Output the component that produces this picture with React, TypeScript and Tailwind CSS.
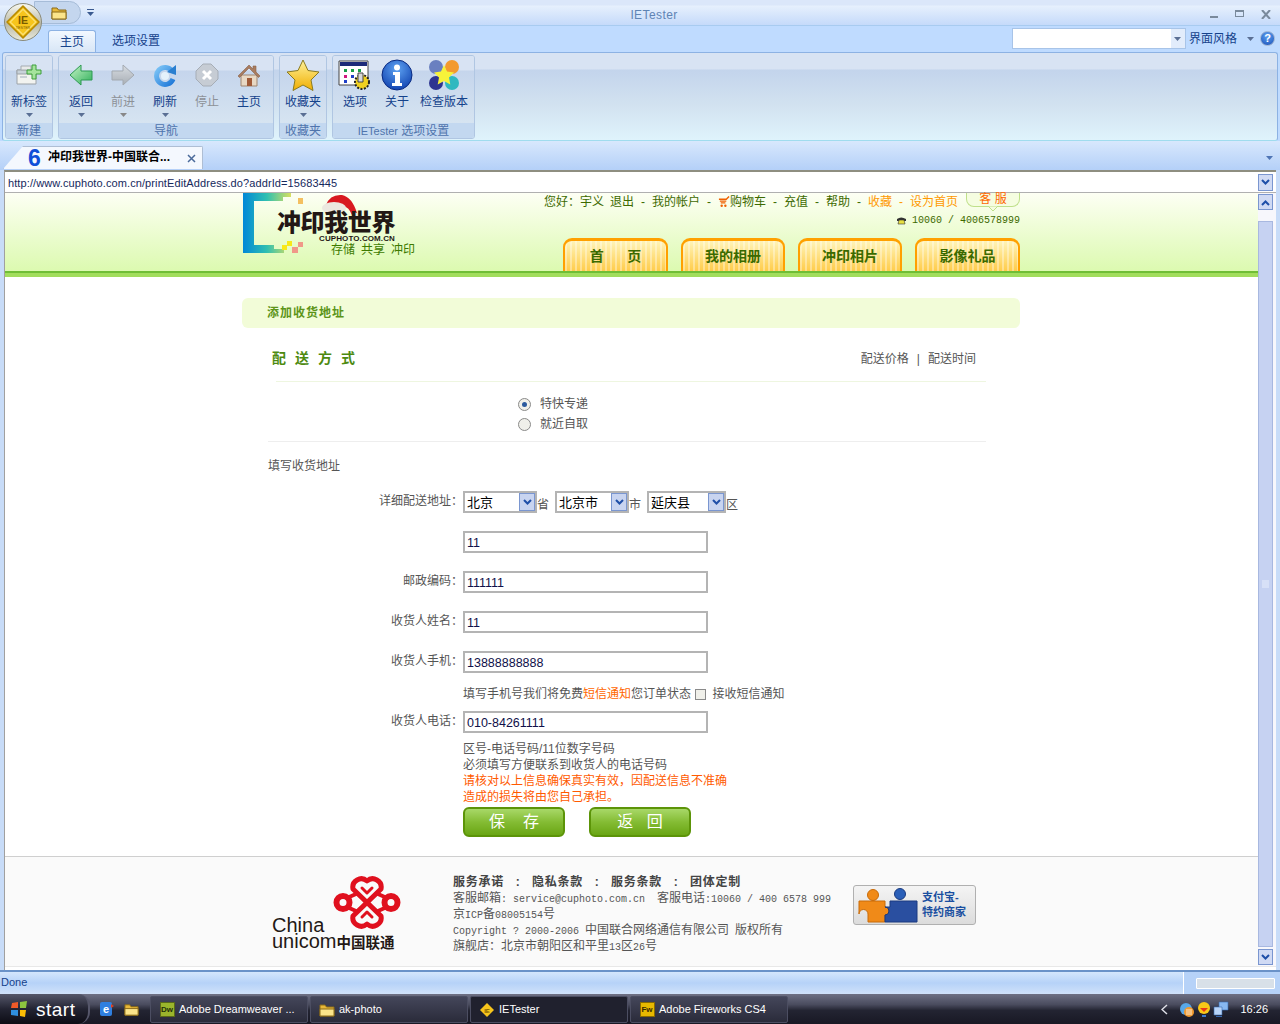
import React from "react";

const Arrow = ({ c = "#5a6f94" }: { c?: string }) => (
  <svg width="7" height="4" viewBox="0 0 7 4" className="block"><path d="M0 0h7L3.5 4z" fill={c} /></svg>
);

const Orb = () => (
  <div className="absolute left-[4px] top-[3px] w-[38px] h-[38px] rounded-full bg-[linear-gradient(180deg,#f8f8f0,#b9b9a8_55%,#e8e8da)] border border-[#8a8a78] flex items-center justify-center">
    <svg width="34" height="34" viewBox="0 0 32 32">
      <path d="M16 1 31 16 16 31 1 16z" fill="#f7c51c" stroke="#b88a00" strokeWidth="1.500" strokeLinejoin="round" />
      <path d="M16 4 28 16 16 28 4 16z" fill="none" stroke="#fbe27a" />
      <text x="16" y="17.500" textAnchor="middle" fontSize="10" fontWeight="700" fill="#7a5c00" fontFamily="Liberation Sans">IE</text>
      <text x="16" y="22.500" textAnchor="middle" fontSize="3.500" fill="#7a5c00" fontFamily="Liberation Sans">TESTER</text>
    </svg>
  </div>
);

const Folder = ({ s = 16 }: { s?: number }) => (
  <svg width={s} height={s} viewBox="0 0 16 16">
    <path d="M1 3h5l1.500 2H15v9H1z" fill="#e8b838" stroke="#8a6a18" />
    <path d="M1 7h14v7H1z" fill="#fbe48a" stroke="#8a6a18" />
  </svg>
);

const IcoNew = () => (
  <svg width="28" height="28" viewBox="0 0 28 28">
    <path d="M2 9h19v14H2z" fill="#f2f3f0" stroke="#9da3a8" />
    <path d="M2 9h19v4H2z" fill="#c8d2da" stroke="#9da3a8" />
    <path d="M6 5h10v4H6z" fill="#e8eaea" stroke="#a5abb0" />
    <path d="M5 15h7v2H5z" fill="#c9d0d6" />
    <path d="M17 4h4v5h5v4h-5v5h-4v-5h-5V9h5z" fill="#a5e39d" stroke="#3d9e3a" />
  </svg>
);
const IcoBack = () => (
  <svg width="24" height="24" viewBox="0 0 24 24">
    <defs>
      <linearGradient id="bk" x1="0" y1="0" x2="1" y2="1"><stop offset="0" stopColor="#c8f4c8" /><stop offset="1" stopColor="#2fb05a" /></linearGradient>
    </defs>
    <path d="M1 12 12 2v6h11v9H12v5z" fill="url(#bk)" stroke="#2c9a52" strokeLinejoin="round" />
  </svg>
);
const IcoFwd = () => (
  <svg width="24" height="24" viewBox="0 0 24 24">
    <defs>
      <linearGradient id="fw" x1="0" y1="0" x2="0" y2="1"><stop offset="0" stopColor="#d8dde2" /><stop offset="1" stopColor="#a8aeb5" /></linearGradient>
    </defs>
    <path d="M23 12 12 2v6H1v9h11v5z" fill="url(#fw)" stroke="#a3a9b0" strokeLinejoin="round" />
  </svg>
);
const IcoRefresh = () => (
  <svg width="24" height="24" viewBox="0 0 24 24">
    <defs>
      <linearGradient id="rf" x1="0" y1="0" x2="1" y2="1"><stop offset="0" stopColor="#7cc4f6" /><stop offset="1" stopColor="#1f78d8" /></linearGradient>
    </defs>
    <path d="M19 8a8.500 8.500 0 1 0 1 8" fill="none" stroke="url(#rf)" strokeWidth="5" />
    <circle cx="12" cy="13" r="4" fill="#e4f1fb" />
    <path d="M14 9l9-7v10z" fill="#2a7fd0" />
  </svg>
);
const IcoStop = () => (
  <svg width="24" height="24" viewBox="0 0 24 24">
    <path d="M8 1h8l7 7v8l-7 7H8l-7-7V8z" fill="#c6ccd4" stroke="#a6adb6" />
    <path d="M8 8l8 8M16 8l-8 8" stroke="#fff" strokeWidth="3" />
  </svg>
);
const IcoHome = () => (
  <svg width="24" height="24" viewBox="0 0 24 24">
    <path d="M4 12h16v11H4z" fill="#e8d8c4" stroke="#a08670" />
    <path d="M1 13 12 2l4 4V3h3v6l4 4-1.500 1.500L12 5 2.500 14.500z" fill="#a87c60" stroke="#8a6248" strokeWidth=".6" />
    <path d="M10 15h5v8h-5z" fill="#a05a38" />
  </svg>
);
const IcoStar = () => (
  <svg width="34" height="32" viewBox="0 0 34 32">
    <defs>
      <linearGradient id="st" x1="0" y1="0" x2="0" y2="1"><stop offset="0" stopColor="#fff29a" /><stop offset="1" stopColor="#f0ae00" /></linearGradient>
    </defs>
    <path d="M17 1l5 10.500 11 1.500-8 8 2 10.500-10-5.500-10 5.500 2-10.500-8-8 11-1.500z" fill="url(#st)" stroke="#8a7a20" strokeLinejoin="round" />
  </svg>
);
const IcoOpts = () => (
  <svg width="34" height="30" viewBox="0 0 34 30">
    <path d="M1 1h29v24H1z" fill="#fff" stroke="#444" />
    <path d="M2 2h27v4H2z" fill="#1c2a78" />
    <path d="M6 9h3v3H6zM13 9h3v3h-3zM20 9h3v3h-3z" fill="#18a048" />
    <path d="M6 15h3v3H6zM20 15h3v3h-3z" fill="#d01880" />
    <path d="M13 15h3v3h-3zM6 20h3v3H6z" fill="#2040c8" />
    <circle cx="24" cy="22" r="7" fill="#f0d020" stroke="#222" strokeDasharray="2 1.500" strokeWidth="2" />
    <path d="M20 13h5v9h-5z" fill="#d8d8d8" stroke="#444" />
  </svg>
);
const IcoInfo = () => (
  <svg width="32" height="32" viewBox="0 0 32 32">
    <defs>
      <radialGradient id="inf" cx=".5" cy=".3" r=".8"><stop offset="0" stopColor="#5ea2f2" /><stop offset="1" stopColor="#0838a8" /></radialGradient>
    </defs>
    <circle cx="16" cy="16" r="15" fill="url(#inf)" stroke="#0a2a80" />
    <circle cx="16" cy="8.500" r="3" fill="#fff" />
    <path d="M12 13h7v11h2v3H11v-3h3v-8h-2z" fill="#fff" />
  </svg>
);
const IcoCheck = () => (
  <svg width="34" height="32" viewBox="0 0 34 32">
    <circle cx="9" cy="8" r="7" fill="#6a80c0" />
    <circle cx="25" cy="8" r="7" fill="#f39a2e" />
    <circle cx="9" cy="24" r="7" fill="#2e3590" />
    <circle cx="25" cy="24" r="7" fill="#2fb8c0" />
    <path d="M17 6l3 6.500 7 1-5 5 1.300 7L17 22l-6.300 3.500 1.300-7-5-5 7-1z" fill="#f7f23a" />
  </svg>
);

const RBtn = ({ icon, label, arrow, off, w = "w-[42px]" }: { icon: React.ReactNode; label: string; arrow?: boolean; off?: boolean; w?: string }) => (
  <div className={`${w} h-[67px] shrink-0 flex flex-col items-center`}>
    <div className="h-[35px] mt-[1px] flex items-center justify-center">{icon}</div>
    <div className={`mt-[2px] h-[16px] leading-[16px] text-[12px] whitespace-nowrap ${off ? "text-[#8d9197]" : "text-[#15428b]"}`}>{label}</div>
    {arrow && <div className="mt-[3px]"><Arrow c={off ? "#888" : "#5a6f94"} /></div>}
  </div>
);

const Group = ({ w, label, children }: { w: string; label: React.ReactNode; children: React.ReactNode }) => (
  <div className={`${w} h-[84px] rounded-[3px] border border-[#b0c6e2] flex flex-col overflow-hidden shrink-0`}>
    <div className="h-[67px] px-[1px] flex justify-start bg-[linear-gradient(180deg,#d8e3f3_0,#d8e3f3_14px,#c5d5ec_15px,#d6e4f1_100%)]">{children}</div>
    <div className="flex-1 bg-[#c3d8f0] pt-[1px] text-center text-[12px] leading-[14px] text-[#4f74ad] whitespace-pre">{label}</div>
  </div>
);

const Select = ({ w, text }: { w: string; text: string }) => (
  <div className={`${w} h-[22px] border-2 border-[#b4b4b4] bg-white flex items-center justify-between text-[13px] text-black`}>
    <span className="pl-[2px] leading-none">{text}</span>
    <span className="w-[16px] h-[18px] border border-[#7a96d0] bg-[#c8d4f0] flex items-center justify-center">
      <svg width="9" height="7" viewBox="0 0 9 7"><path d="M1 1l3.500 3.500L8 1" fill="none" stroke="#1f4fa8" strokeWidth="2" /></svg>
    </span>
  </div>
);

const Field = ({ v }: { v: string }) => (
  <input readOnly value={v} className="w-[245px] h-[22px] border-2 border-[#b4b4b4] bg-white px-[2px] pt-[1px] text-[12.500px] text-[#10104a] outline-none font-['Liberation_Sans',sans-serif]" />
);

const Row = ({ label, mt = "mt-[18px]", children }: { label?: string; mt?: string; children: React.ReactNode }) => (
  <div className={`${mt} h-[22px] flex items-center`}>
    <div className="w-[221px] shrink-0 pb-[2px] text-right text-[12px] text-[#555] leading-none">{label}</div>
    {children}
  </div>
);

const NavTab = ({ t, w }: { t: string; w: string }) => (
  <div className={`${w} h-[33px] rounded-t-[9px] border-x-2 border-t-[3px] border-[#ffa000] bg-[repeating-linear-gradient(90deg,rgba(255,255,255,.35)_0,rgba(255,255,255,.35)_2px,transparent_2px,transparent_5px),linear-gradient(180deg,#fff4b8,#ffcc4a)] flex items-center justify-center text-[14px] font-bold text-[#3a6a00] whitespace-pre`}>{t}</div>
);

const Dash = ({ c = "text-[#3d6a00]" }: { c?: string }) => <span className={`w-[6px] text-center ${c}`}>-</span>;

const M = ({ children }: { children: React.ReactNode }) => (
  <span className="font-['Liberation_Mono',monospace] text-[10px]">{children}</span>
);

const GreenBtn = ({ t }: { t: string }) => (
  <div className="w-[102px] h-[30px] rounded-[6px] border-2 border-[#5c9408] bg-[linear-gradient(180deg,#a8d868,#84bc34_50%,#6aa614)] flex items-center justify-center text-white text-[16px] whitespace-pre">{t}</div>
);

const Knot = () => (
  <svg width="70" height="55" viewBox="0 0 70 55">
    <g fill="none" stroke="#e0101e" strokeWidth="5" strokeLinejoin="round" strokeLinecap="round">
      <path d="M35 27.500 21 14a8.500 8.500 0 0 1 14-8 8.500 8.500 0 0 1 14 8z" />
      <path d="M35 27.500 21 41a8.500 8.500 0 0 0 14 8 8.500 8.500 0 0 0 14-8z" />
      <path d="M30 13l5 5 5-5M30 42l5-5 5 5" strokeWidth="3" />
      <circle cx="11" cy="27.500" r="6.500" strokeWidth="6" />
      <circle cx="59" cy="27.500" r="6.500" strokeWidth="6" />
      <path d="M24 19 15 23M24 36l-9-4M46 19l9 4M46 36l9-4" strokeWidth="4" />
    </g>
  </svg>
);

const Puzzle = () => (
  <svg width="66" height="35" viewBox="0 0 66 35">
    <circle cx="17" cy="7" r="5.500" fill="#f08a18" stroke="#c86a08" />
    <path d="M3 13h26v6a4 4 0 1 1 0 8v7H12v-8a4 4 0 1 0-9 0z" fill="#f08a18" stroke="#c86a08" />
    <circle cx="44" cy="6" r="5.500" fill="#2a5fb8" stroke="#1a3a80" />
    <path d="M29 19a4 4 0 1 1 0 8v7h32V13H34v6z" fill="#2a4fa0" stroke="#1a3a80" />
  </svg>
);

const TaskBtn = ({ icon, t, active }: { icon: React.ReactNode; t: string; active?: boolean }) => (
  <div className={`w-[158px] h-[27px] shrink-0 mt-[2px] mr-[2px] rounded-[2px] border border-[#4c4e62] flex items-center pl-[8px] gap-[4px] text-white text-[11px] ${active ? "bg-[#20212e]" : "bg-[linear-gradient(180deg,#44465a,#2a2b3a)]"}`}>
    <span className="w-[16px] h-[16px] flex items-center justify-center shrink-0">{icon}</span>
    <span className="whitespace-nowrap">{t}</span>
  </div>
);

export default function App() {
  return (
    <div className="relative w-[1280px] h-[1024px] overflow-hidden flex flex-col bg-[#bfdbff] font-['Liberation_Sans','Noto_Sans_CJK_SC',sans-serif]">
      <Orb />
      {/* title bar */}
      <div className="h-[26px] shrink-0 border-b border-[#a8cbf0] bg-[linear-gradient(180deg,#dbe7fa,#dbe7fa_5px,#e6f0fd_6px,#c5dafa)] flex items-center">
        <div className="ml-[34px] w-[47px] h-[23px] rounded-r-[12px] bg-[#c4d6ee] border border-[#a6bcd8] flex items-center justify-center pl-[3px]"><Folder /></div>
        <div className="ml-[6px]"><svg width="7" height="7" viewBox="0 0 7 7"><path d="M0 0h7v1H0zM0 3h7L3.500 7z" fill="#3a5a90" /></svg></div>
        <div className="flex-1 text-center text-[12px] text-[#5f84b4] pt-[4px] pl-[4px] tracking-[0.4px]">IETester</div>
        <div className="flex items-center gap-[17px] pr-[9px] pt-[3px]">
          <span className="w-[8px] h-[2px] mt-[6px] bg-[#7a8a9c]" />
          <span className="w-[9px] h-[7px] border border-[#7a8a9c] border-t-2 -mt-[2px]" />
          <svg width="10" height="9" viewBox="0 0 10 9"><path d="M1 0l8 9M9 0 1 9" stroke="#7a8a9c" strokeWidth="2" /></svg>
        </div>
      </div>
      {/* ribbon tabs */}
      <div className="h-[26px] shrink-0 bg-[#bfdbff] flex items-end">
        <div className="ml-[48px] w-[48px] h-[22px] rounded-t-[3px] border border-b-0 border-[#8db2e3] bg-[linear-gradient(180deg,#f2f8ff,#d8e6f6)] text-center text-[12px] leading-[22px] text-[#15428b]">主页</div>
        <div className="ml-[16px] h-[22px] text-[12px] leading-[22px] text-[#15428b]">选项设置</div>
        <div className="flex-1" />
        <div className="w-[174px] h-[21px] mb-[3px] border border-[#a8c4e8] bg-white flex justify-end">
          <span className="w-[14px] bg-[#e2ecfb] flex items-center justify-center"><Arrow /></span>
        </div>
        <div className="ml-[3px] h-[24px] text-[12px] leading-[22px] text-[#15428b]">界面风格</div>
        <div className="ml-[10px] h-[24px] pt-[9px]"><Arrow /></div>
        <div className="ml-[6px] mr-[5px] mb-[6px] w-[15px] h-[15px] rounded-full bg-[radial-gradient(circle_at_50%_30%,#5ea2f2,#1a50b8)] border border-[#a0b4d0] text-white text-[11px] font-bold text-center leading-[13px]">?</div>
      </div>
      {/* ribbon */}
      <div className="h-[89px] shrink-0 mx-[2px] rounded-[3px] border border-[#8db2e3] border-b-[#a0dcee] bg-[linear-gradient(180deg,#d8e3f3_0,#d8e3f3_16px,#c3d4ec_17px,#d2e2f0_60%,#dff3fc_100%)] pt-[2px] px-[2px] flex gap-[5px]">
        <Group w="w-[48px]" label="新建"><RBtn icon={<IcoNew />} label="新标签" arrow w="w-[44px]" /></Group>
        <Group w="w-[216px]" label="导航">
          <RBtn icon={<IcoBack />} label="返回" arrow />
          <RBtn icon={<IcoFwd />} label="前进" arrow off />
          <RBtn icon={<IcoRefresh />} label="刷新" arrow />
          <RBtn icon={<IcoStop />} label="停止" off />
          <RBtn icon={<IcoHome />} label="主页" />
        </Group>
        <Group w="w-[48px]" label="收藏夹"><RBtn icon={<IcoStar />} label="收藏夹" arrow w="w-[44px]" /></Group>
        <Group w="w-[143px]" label={<><span className="text-[11px]">IETester</span> 选项设置</>}>
          <RBtn icon={<IcoOpts />} label="选项" />
          <RBtn icon={<IcoInfo />} label="关于" />
          <RBtn icon={<IcoCheck />} label="检查版本" w="w-[52px]" />
        </Group>
      </div>
      {/* browser tab row */}
      <div className="h-[29px] shrink-0 bg-[linear-gradient(180deg,#d8e8fd,#b4d0f8)] flex items-end">
        <div className="ml-[3px] w-[200px] h-[23px] mb-[1px] bg-[#f4f8fe] border border-b-0 border-[#aebed4] rounded-tr-[2px] [clip-path:polygon(20px_0,100%_0,100%_100%,0_100%)] flex items-center pl-[23px]">
          <span className="w-[15px] text-center text-[23px] font-bold leading-none text-[#1050d8] font-['Liberation_Sans']">6</span>
          <span className="ml-[6px] -mt-[2px] w-[132px] text-[12px] font-bold text-black whitespace-nowrap">冲印我世界-中国联合...</span>
          <svg className="ml-[7px]" width="9" height="9" viewBox="0 0 9 9"><path d="M1 1l7 7M8 1 1 8" stroke="#4a6a9a" strokeWidth="1.500" /></svg>
        </div>
        <div className="flex-1 flex justify-end pr-[7px] pb-[10px]"><Arrow c="#4f75b5" /></div>
      </div>
      {/* browser frame */}
      <div className="flex-1 min-h-0 px-[4px] flex bg-[#c8dcf8]">
        <div className="flex-1 min-w-0 flex flex-col border-t-2 border-[#8e8e80] border-l border-l-[#a0a0a0] bg-white">
          <div className="h-[21px] shrink-0 flex items-center justify-between border-b border-[#b0b0b0] pr-[3px]">
            <span className="pl-[3px] pt-[2px] text-[11px] text-[#15285c] tracking-[0.1px]">http://www.cuphoto.com.cn/printEditAddress.do?addrId=15683445</span>
            <span className="w-[15px] h-[17px] border border-[#7a96d0] bg-[#d0daf4] flex items-center justify-center">
              <svg width="9" height="7" viewBox="0 0 9 7"><path d="M1 1l3.500 3.500L8 1" fill="none" stroke="#1f4fa8" strokeWidth="2" /></svg>
            </span>
          </div>
          <div className="flex-1 min-h-0 flex">
            {/* page */}
            <div className="flex-1 min-w-0 flex flex-col">
              {/* header */}
              <div className="h-[78px] shrink-0 bg-[linear-gradient(180deg,#fdfff4,#dcfab0)]">
                <div className="w-[778px] ml-[237px] flex justify-between">
                  {/* logo */}
                  <div className="relative w-[174px] h-[62px]">
                    <svg className="absolute left-0 top-0" width="174" height="62" viewBox="0 0 174 62">
                      <defs><linearGradient id="lg" x1="0" y1="0" x2="1" y2="0"><stop offset="0" stopColor="#0088d8" /><stop offset=".5" stopColor="#30c0b0" /><stop offset="1" stopColor="#d8e060" /></linearGradient></defs>
                      <path d="M1 0h48v4h-8v4H12v44h20v4h10v4H1z" fill="url(#lg)" />
                      <path d="M56 5h5v6h-5z" fill="#f4c060" />
                      <path d="M40 52h5v5h-5zM45 48h5v5h-5z" fill="#f8e818" />
                      <path d="M50 54h6v6h-6zM56 49h5v5h-5z" fill="#f09888" />
                      <path d="M84 12Q88 1 100 2q10 2 15 18l-5 2q-4-10-10-8L84 16z" fill="#d81820" />
                      <ellipse cx="92" cy="15" rx="12" ry="6" fill="#ece8e0" />
                      <circle cx="113" cy="22" r="2.500" fill="#ece8e0" />
                    </svg>
                    <div className="absolute left-[35px] top-[15px] text-[24px] leading-[30px] font-black text-[#231815] whitespace-nowrap tracking-[-0.400px]">冲印我世界</div>
                    <div className="absolute left-[77px] top-[41px] text-[8px] leading-[9px] font-bold text-[#231815] whitespace-nowrap tracking-[0.1px]">CUPHOTO.COM.CN</div>
                    <div className="absolute left-[89px] top-[50px] text-[12px] leading-[14px] text-[#3d7a00] flex gap-[6px]"><span>存储</span><span>共享</span><span>冲印</span></div>
                  </div>
                  {/* right */}
                  <div className="w-[476px] flex flex-col items-end">
                    <div className="h-[16px] flex items-start">
                      <div className="flex items-center gap-[6px] text-[12px] leading-[16px] pt-[1px] text-[#3d6a00] whitespace-pre">
                        <span>您好：宇义</span><span>退出</span><Dash /><span>我的帐户</span><Dash />
                        <span className="flex items-center">
                          <svg width="12" height="12" viewBox="0 0 13 12"><path d="M1 3h8l3-3M2 5h7M3 7h5" stroke="#f06000" strokeWidth="1.500" fill="none" /><circle cx="4" cy="10" r="1.300" fill="#f06000" /><circle cx="8" cy="10" r="1.300" fill="#f06000" /></svg>
                          <span>购物车</span>
                        </span>
                        <Dash /><span>充值</span><Dash /><span>帮助</span><Dash />
                        <span className="text-[#ff9900]">收藏</span><Dash c="text-[#ff9900]" /><span className="text-[#ff9900]">设为首页</span>
                      </div>
                      <div className="ml-[8px] relative w-[54px] h-[14px] rounded-b-[8px] border border-t-0 border-[#bfe08a] bg-[#f5fde0] text-center text-[12px] leading-[12px] text-[#ff6600] whitespace-pre">客 服
                        <svg className="absolute left-[21px] top-[13px]" width="10" height="5" viewBox="0 0 10 5"><path d="M0 0l5 5 5-5z" fill="#f5fde0" stroke="#bfe08a" /></svg>
                      </div>
                    </div>
                    <div className="mt-[3px] h-[16px] flex items-center text-[#3d6a00]">
                      <svg className="mr-[5px]" width="11" height="9" viewBox="0 0 11 9"><path d="M1 3q4-3 9 0v2H8V4H3v1H1z" fill="#333" /><path d="M3 4h5l1 4H2z" fill="#e8e040" stroke="#333" strokeWidth=".6" /></svg>
                      <M>10060 / 4006578999</M>
                    </div>
                    <div className="mt-[10px] flex gap-[13px]">
                      <NavTab t={"首      页"} w="w-[105px]" />
                      <NavTab t="我的相册" w="w-[104px]" />
                      <NavTab t="冲印相片" w="w-[104px]" />
                      <NavTab t="影像礼品" w="w-[105px]" />
                    </div>
                  </div>
                </div>
              </div>
              <div className="h-[2px] shrink-0 bg-[#6fbe36]" />
              <div className="h-[4px] shrink-0 bg-[#a2dd5c]" />
              {/* content */}
              <div className="w-[778px] ml-[237px] shrink-0">
                <div className="mt-[21px] h-[30px] rounded-[6px] bg-[#f2fcd8] pl-[25px] text-[12px] tracking-[1px] font-bold leading-[30px] text-[#5c9418]">添加收货地址</div>
                <div className="h-[53px] pt-[8px] flex items-center justify-between pl-[30px] pr-[44px]">
                  <span className="text-[14px] font-bold text-[#4d8a10] tracking-[9px]">配送方式</span>
                  <span className="text-[12px] text-[#555] flex gap-[8px]"><span>配送价格</span><span>|</span><span>配送时间</span></span>
                </div>
                <div className="ml-[34px] w-[710px] h-[1px] bg-[#eef6e0]" />
                <div className="mt-[12px] ml-[276px] h-[20px] flex items-center text-[12px] text-[#555]">
                  <span className="w-[13px] h-[13px] rounded-full border border-[#8a8a8a] bg-[#f0f0ea] flex items-center justify-center"><span className="w-[5px] h-[5px] rounded-full bg-[#2b5a9e]" /></span>
                  <span className="ml-[9px]">特快专递</span>
                </div>
                <div className="ml-[276px] h-[20px] flex items-center text-[12px] text-[#555]">
                  <span className="w-[13px] h-[13px] rounded-full border border-[#8a8a8a] bg-[#f0f0ea]" />
                  <span className="ml-[9px]">就近自取</span>
                </div>
                <div className="mt-[7px] ml-[26px] w-[718px] h-[1px] bg-[#eeeeee]" />
                <div className="mt-[16px] ml-[26px] h-[16px] text-[12px] leading-[16px] text-[#555]">填写收货地址</div>
                <Row label="详细配送地址：" mt="mt-[17px]">
                  <Select w="w-[74px]" text="北京" />
                  <span className="w-[18px] pt-[5px] text-[12px] text-[#555]">省</span>
                  <Select w="w-[74px]" text="北京市" />
                  <span className="w-[18px] pt-[5px] text-[12px] text-[#555]">市</span>
                  <Select w="w-[79px]" text="延庆县" />
                  <span className="pt-[5px] text-[12px] text-[#555]">区</span>
                </Row>
                <Row><Field v="11" /></Row>
                <Row label="邮政编码："><Field v="111111" /></Row>
                <Row label="收货人姓名："><Field v="11" /></Row>
                <Row label="收货人手机："><Field v="13888888888" /></Row>
                <div className="mt-[13px] ml-[221px] h-[16px] flex items-center text-[12px] text-[#555] whitespace-pre">
                  <span>填写手机号我们将免费</span><span className="text-[#ff6600]">短信通知</span><span>您订单状态 </span>
                  <span className="ml-[1px] mr-[6px] w-[11px] h-[11px] border border-[#8a8a8a] bg-[#f0f0ea]" />
                  <span>接收短信通知</span>
                </div>
                <Row label="收货人电话：" mt="mt-[9px]"><Field v="010-84261111" /></Row>
                <div className="mt-[8px] ml-[221px] text-[12px] leading-[16px] text-[#555]">
                  <div>区号-电话号码/11位数字号码</div>
                  <div>必须填写方便联系到收货人的电话号码</div>
                  <div className="text-[#ff5a00]">请核对以上信息确保真实有效，因配送信息不准确</div>
                  <div className="text-[#ff5a00]">造成的损失将由您自己承担。</div>
                </div>
                <div className="mt-[2px] ml-[221px] flex gap-[24px]">
                  <GreenBtn t={"保    存"} />
                  <GreenBtn t={"返   回"} />
                </div>
              </div>
              {/* footer */}
              <div className="mt-[19px] flex-1 min-h-0 border-t border-[#cfcfcf] bg-[#fafafa]">
                <div className="w-[778px] ml-[237px] flex">
                  <div className="ml-[30px] w-[135px] h-[90px] mt-[14px] relative shrink-0">
                    <div className="absolute left-[60px] top-[4px]"><Knot /></div>
                    <div className="absolute left-0 top-[46px] text-[20px] leading-[16px] text-[#231815]">China</div>
                    <div className="absolute left-0 top-[62px] text-[20px] leading-[16px] text-[#231815] whitespace-nowrap">unicom<span className="text-[14.500px] font-bold">中国联通</span></div>
                  </div>
                  <div className="ml-[46px] w-[400px] mt-[17px] text-[12px] leading-[16px] text-[#555] whitespace-pre">
                    <div className="h-[16px] flex font-bold text-[#444] tracking-[0.75px]">
                      <span>服务承诺</span><span className="w-[28px] text-center">:</span><span>隐私条款</span><span className="w-[28px] text-center">:</span><span>服务条款</span><span className="w-[28px] text-center">:</span><span>团体定制</span>
                    </div>
                    <div className="h-[16px]">客服邮箱<M>: service@cuphoto.com.cn  </M>客服电话<M>:10060 / 400 6578 999</M></div>
                    <div className="h-[16px]">京<M>ICP</M>备<M>08005154</M>号</div>
                    <div className="h-[16px]"><M>Copyright ? 2000-2006 </M>中国联合网络通信有限公司<M> </M>版权所有</div>
                    <div className="h-[16px]">旗舰店：北京市朝阳区和平里<M>13</M>区<M>26</M>号</div>
                  </div>
                  <div className="mt-[28px] w-[123px] h-[40px] rounded-[3px] border border-[#b0b0b0] bg-[linear-gradient(180deg,#f4f4f4,#dcdcdc)] flex items-center pl-[2px] shrink-0">
                    <Puzzle />
                    <div className="text-[11px] leading-[15px] font-bold text-[#1a4fa0] whitespace-nowrap">支付宝-<br />特约商家</div>
                  </div>
                </div>
              </div>
            </div>
            {/* scrollbar */}
            <div className="w-[18px] shrink-0 pr-[3px] flex flex-col bg-[#f7f7fc]">
              <span className="h-[16px] mt-[1px] border border-[#7a96d0] bg-[#d0daf4] flex items-center justify-center shrink-0">
                <svg width="9" height="7" viewBox="0 0 9 7"><path d="M1 6l3.500-3.500L8 6" fill="none" stroke="#1f4fa8" strokeWidth="2" /></svg>
              </span>
              <div className="mt-[11px] flex-1 border border-[#a8b8e0] bg-[#c6d2f2] flex items-center justify-center">
                <svg width="7" height="8" viewBox="0 0 7 8"><path d="M0 1h7M0 3h7M0 5h7M0 7h7" stroke="#e8eefc" /></svg>
              </div>
              <span className="h-[16px] mt-[2px] mb-[1px] border border-[#7a96d0] bg-[#d0daf4] flex items-center justify-center shrink-0">
                <svg width="9" height="7" viewBox="0 0 9 7"><path d="M1 1l3.500 3.500L8 1" fill="none" stroke="#1f4fa8" strokeWidth="2" /></svg>
              </span>
            </div>
          </div>
          <div className="h-[4px] shrink-0 border-t border-[#e8e8e8] bg-white" />
        </div>
      </div>
      {/* status */}
      <div className="h-[24px] shrink-0 border-t-2 border-[#6a92c8] bg-[linear-gradient(180deg,#d4e6fc,#b6d2f8_50%,#d0e2fa)] flex">
        <div className="flex-1 pl-[1px] pt-[2px] text-[11px] leading-[16px] text-[#15428b] border-r border-white">Done</div>
        <div className="w-[96px] flex items-center pl-[12px] bg-[#b6d2f8]">
          <span className="w-[79px] h-[11px] rounded-[1px] border border-white bg-[#d8e0e8]" />
        </div>
      </div>
      {/* taskbar */}
      <div className="h-[30px] shrink-0 bg-[linear-gradient(180deg,#6e7084,#4a4c5e_35%,#232432_55%,#181824)] flex items-start">
        <div className="w-[90px] h-[30px] shrink-0 rounded-r-[12px] border-r-2 border-[#55566a] bg-[linear-gradient(180deg,#55576a,#232432_50%,#0c0c14)] flex items-center pl-[10px] gap-[8px] text-white text-[19px] tracking-[0.5px] leading-none">
          <svg width="18" height="18" viewBox="0 0 18 18"><path d="M2 3l6-1v6H1z" fill="#f05a28" /><path d="M10 2l7-1-1 7h-6z" fill="#8dc63f" /><path d="M1 10h7v6l-7-1z" fill="#2f8fe0" /><path d="M10 10h6l-1 7-5-1z" fill="#fbbc05" /></svg>
          <span>start</span>
        </div>
        <div className="w-[60px] h-[30px] shrink-0 flex items-center pl-[9px] gap-[9px]">
          <svg width="16" height="16" viewBox="0 0 16 16"><rect x="1" y="1" width="12" height="14" rx="2" fill="#2f7fe0" /><text x="7" y="12" textAnchor="middle" fontSize="11" fill="#fff" fontWeight="700" fontFamily="Liberation Sans">e</text><path d="M12 3l3 2-3 2z" fill="#e04020" /></svg>
          <Folder s={15} />
        </div>
        <TaskBtn icon={<span className="w-[15px] h-[15px] bg-[#9bb52c] border border-[#5a6a18] text-[8px] font-bold text-[#22300a] text-center leading-[13px]">Dw</span>} t="Adobe Dreamweaver ..." />
        <TaskBtn icon={<Folder />} t="ak-photo" />
        <TaskBtn active icon={<svg width="16" height="16" viewBox="0 0 16 16"><path d="M8 1l7 7-7 7-7-7z" fill="#f7c51c" /><text x="8" y="10.500" textAnchor="middle" fontSize="6" fontWeight="700" fill="#7a5c00" fontFamily="Liberation Sans">IE</text></svg>} t="IETester" />
        <TaskBtn icon={<span className="w-[15px] h-[15px] bg-[#e8b800] border border-[#8a6a00] text-[8px] font-bold text-[#3a2a00] text-center leading-[13px]">Fw</span>} t="Adobe Fireworks CS4" />
        <div className="flex-1 h-[30px] flex items-center justify-end pr-[12px]">
          <svg width="7" height="11" viewBox="0 0 7 11"><path d="M6 1 1 5.500 6 10" stroke="#dfe0e8" strokeWidth="1.500" fill="none" /></svg>
          <div className="ml-[11px] flex items-center gap-[1px]">
            <svg width="16" height="17" viewBox="0 0 16 17"><circle cx="7" cy="8" r="6" fill="#58a8e8" /><circle cx="10" cy="11" r="5" fill="#f09a30" /><path d="M7 9h6M7 11h6M7 13h6" stroke="#fff" strokeWidth=".8" /></svg>
            <svg width="16" height="17" viewBox="0 0 16 17"><circle cx="8" cy="7" r="6" fill="#f8c818" /><path d="M4 7h8l-4 4z" fill="#e83818" /><path d="M6 14h4v2H6z" fill="#3878d0" /></svg>
            <svg width="16" height="17" viewBox="0 0 16 17"><path d="M6 1h9v8H6z" fill="#88b8f0" stroke="#3868b0" strokeWidth=".6" /><path d="M1 6h8v8H1z" fill="#b8d4f8" stroke="#3868b0" strokeWidth=".6" /><path d="M3 15h6v1H3z" fill="#3868b0" /></svg>
          </div>
          <span className="ml-[11px] text-white text-[11px]">16:26</span>
        </div>
      </div>
    </div>
  );
}
